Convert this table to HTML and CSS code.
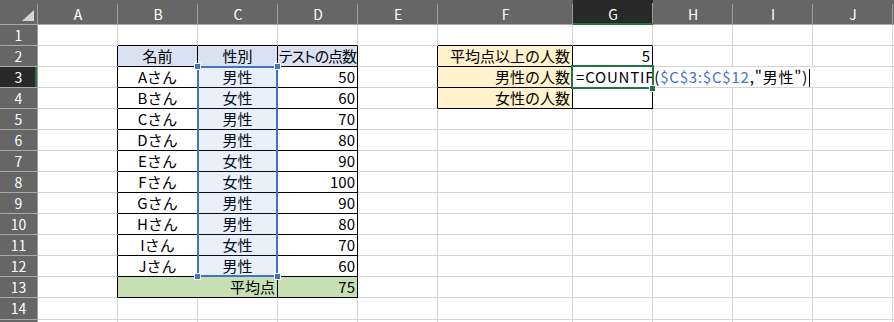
FILE: index.html
```html
<!DOCTYPE html>
<html lang="ja">
<head>
<meta charset="utf-8">
<title>Excel COUNTIF</title>
<link rel="stylesheet" href="styles.css">
</head>
<body>
<div class="sheet">
  <div class="row hdr">
    <div class="corner"><svg class="tri" width="38" height="24" viewBox="0 0 38 24"><polygon points="34,10 34,21 22,21" fill="#d4d4d4"/></svg></div>
    <div class="ch">A</div><div class="ch">B</div><div class="ch">C</div><div class="ch">D</div><div class="ch">E</div>
    <div class="ch">F</div><div class="ch sel">G</div><div class="ch">H</div><div class="ch">I</div><div class="ch">J</div><div class="ch"></div>
  </div>

  <div class="row">
    <div class="rh">1</div>
    <div class="c"></div><div class="c tb"></div><div class="c tb"></div><div class="c tb"></div><div class="c"></div>
    <div class="c tb"></div><div class="c tb"></div><div class="c"></div><div class="c"></div><div class="c"></div><div class="c"></div>
  </div>

  <div class="row">
    <div class="rh">2</div>
    <div class="c tr"></div>
    <div class="c bx hd ctr">名前</div>
    <div class="c bx hd ctr">性別</div>
    <div class="c bx hd narrow">テストの点数</div>
    <div class="c tr"></div>
    <div class="c bx yl rt">平均点以上の人数</div>
    <div class="c bx rt">5</div>
    <div class="c"></div><div class="c"></div><div class="c"></div><div class="c"></div>
  </div>

  <div class="row">
    <div class="rh sel">3</div>
    <div class="c tr"></div>
    <div class="c bx ctr">Aさん</div>
    <div class="c bx ctr">男性</div>
    <div class="c bx rt">50</div>
    <div class="c tr"></div>
    <div class="c bx yl rt">男性の人数</div>
    <div class="c bx active">
      <div class="editor">=COUNTIF<span class="paren">(</span><span class="ref">$C$3:$C$12</span>,"男性"<span class="paren">)</span><span class="caret"></span></div>
      <span class="handle"></span>
    </div>
    <div class="c"></div><div class="c"></div><div class="c"></div><div class="c"></div>
  </div>

  <div class="row">
    <div class="rh">4</div>
    <div class="c tr"></div>
    <div class="c bx ctr">Bさん</div>
    <div class="c bx ctr">女性</div>
    <div class="c bx rt">60</div>
    <div class="c tr"></div>
    <div class="c bx yl rt">女性の人数</div>
    <div class="c bx"></div>
    <div class="c"></div><div class="c"></div><div class="c"></div><div class="c"></div>
  </div>

  <div class="row">
    <div class="rh">5</div>
    <div class="c tr"></div>
    <div class="c bx ctr">Cさん</div>
    <div class="c bx ctr">男性</div>
    <div class="c bx rt">70</div>
    <div class="c"></div><div class="c"></div><div class="c"></div><div class="c"></div><div class="c"></div><div class="c"></div><div class="c"></div>
  </div>

  <div class="row">
    <div class="rh">6</div>
    <div class="c tr"></div>
    <div class="c bx ctr">Dさん</div>
    <div class="c bx ctr">男性</div>
    <div class="c bx rt">80</div>
    <div class="c"></div><div class="c"></div><div class="c"></div><div class="c"></div><div class="c"></div><div class="c"></div><div class="c"></div>
  </div>

  <div class="row">
    <div class="rh">7</div>
    <div class="c tr"></div>
    <div class="c bx ctr">Eさん</div>
    <div class="c bx ctr">女性</div>
    <div class="c bx rt">90</div>
    <div class="c"></div><div class="c"></div><div class="c"></div><div class="c"></div><div class="c"></div><div class="c"></div><div class="c"></div>
  </div>

  <div class="row">
    <div class="rh">8</div>
    <div class="c tr"></div>
    <div class="c bx ctr">Fさん</div>
    <div class="c bx ctr">女性</div>
    <div class="c bx rt">100</div>
    <div class="c"></div><div class="c"></div><div class="c"></div><div class="c"></div><div class="c"></div><div class="c"></div><div class="c"></div>
  </div>

  <div class="row">
    <div class="rh">9</div>
    <div class="c tr"></div>
    <div class="c bx ctr">Gさん</div>
    <div class="c bx ctr">男性</div>
    <div class="c bx rt">90</div>
    <div class="c"></div><div class="c"></div><div class="c"></div><div class="c"></div><div class="c"></div><div class="c"></div><div class="c"></div>
  </div>

  <div class="row">
    <div class="rh">10</div>
    <div class="c tr"></div>
    <div class="c bx ctr">Hさん</div>
    <div class="c bx ctr">男性</div>
    <div class="c bx rt">80</div>
    <div class="c"></div><div class="c"></div><div class="c"></div><div class="c"></div><div class="c"></div><div class="c"></div><div class="c"></div>
  </div>

  <div class="row">
    <div class="rh">11</div>
    <div class="c tr"></div>
    <div class="c bx ctr">Iさん</div>
    <div class="c bx ctr">女性</div>
    <div class="c bx rt">70</div>
    <div class="c"></div><div class="c"></div><div class="c"></div><div class="c"></div><div class="c"></div><div class="c"></div><div class="c"></div>
  </div>

  <div class="row">
    <div class="rh">12</div>
    <div class="c tr"></div>
    <div class="c bx ctr">Jさん</div>
    <div class="c bx ctr">男性</div>
    <div class="c bx rt">60</div>
    <div class="c"></div><div class="c"></div><div class="c"></div><div class="c"></div><div class="c"></div><div class="c"></div><div class="c"></div>
  </div>

  <div class="row">
    <div class="rh">13</div>
    <div class="c tr"></div>
    <div class="c bx gr rt span2">平均点</div>
    <div class="c bx gr rt">75</div>
    <div class="c"></div><div class="c"></div><div class="c"></div><div class="c"></div><div class="c"></div><div class="c"></div><div class="c"></div>
  </div>

  <div class="row tall">
    <div class="rh">14</div>
    <div class="c"></div><div class="c"></div><div class="c"></div><div class="c"></div><div class="c"></div>
    <div class="c"></div><div class="c"></div><div class="c"></div><div class="c"></div><div class="c"></div><div class="c"></div>
  </div>

  <div class="row">
    <div class="rh"></div>
    <div class="c"></div><div class="c"></div><div class="c"></div><div class="c"></div><div class="c"></div>
    <div class="c"></div><div class="c"></div><div class="c"></div><div class="c"></div><div class="c"></div><div class="c"></div>
  </div>

  <div class="refbox">
    <span class="knob k-tl"></span><span class="knob k-tr"></span>
    <span class="knob k-bl"></span><span class="knob k-br"></span>
  </div>
</div>
</body>
</html>
```

FILE: styles.css
```css
html, body {
  margin: 0;
  padding: 0;
  background: #ffffff;
}
body {
  width: 894px;
  height: 322px;
  overflow: hidden;
}
.sheet {
  position: relative;
  font-family: "Noto Sans CJK JP", "Noto Sans", sans-serif;
  color: #000;
}
.row {
  display: grid;
  grid-template-columns: 38px repeat(5, 80px) 135px repeat(5, 80px);
  height: 21px;
}
.hdr {
  height: 25px;
}
.row.tall,
.row.tall .rh,
.row.tall .c {
  height: 22px;
}
.row.tall .rh,
.row.tall .c {
  line-height: 21px;
}

/* column headers */
.corner, .ch {
  box-sizing: border-box;
  height: 25px;
  background: linear-gradient(#9a9a9a, #9a9a9a) right bottom / 1px 20px no-repeat, #666666;
  border-bottom: 1px solid #a9a9a9;
}
.tri {
  display: block;
}
.ch {
  color: #ffffff;
  font-family: "Noto Sans CJK JP", sans-serif;
  font-size: 14px;
  line-height: 20px;
  padding-top: 4px;
  text-align: center;
}
.ch.sel {
  background: linear-gradient(#9a9a9a, #9a9a9a) right bottom / 1px 20px no-repeat, #292929;
  border-bottom: 2px solid #217346;
}

/* row headers */
.rh {
  box-sizing: border-box;
  height: 21px;
  background: #666666;
  border-right: 1px solid #9a9a9a;
  border-bottom: 1px solid #a9a9a9;
  color: #ffffff;
  font-size: 14px;
  line-height: 20px;
  text-align: center;
}
.rh.sel {
  background: #292929;
  box-shadow: inset -2px 0 0 #217346;
}

/* cells */
.c {
  box-sizing: border-box;
  height: 21px;
  border-right: 1px solid #d4d4d4;
  border-bottom: 1px solid #d4d4d4;
  font-size: 15px;
  line-height: 20px;
  padding: 0 3px;
  white-space: nowrap;
  overflow: hidden;
}
.tb { border-bottom-color: #000; }
.tr { border-right-color: #000; }
.bx { border-right-color: #000; border-bottom-color: #000; }
.hd { background: #d9e1f2; }
.yl { background: #fff2cc; }
.gr { background: #c6e0b4; }
.ctr { text-align: center; }
.rt { text-align: right; padding-right: 2px; }
.span2 { grid-column: span 2; }
.narrow {
  padding: 0 0 0 1px;
  font-feature-settings: "palt";
  letter-spacing: -1px;
  text-align: left;
}

/* active cell in edit mode */
.active {
  position: relative;
  overflow: visible;
  z-index: 3;
  padding: 0;
}
.active::after {
  content: "";
  position: absolute;
  inset: -2px;
  border: 2px solid #217346;
  pointer-events: none;
}
.editor {
  position: absolute;
  left: 0;
  top: 0;
  height: 20px;
  padding: 0 4px 0 3px;
  background: #ffffff;
  white-space: nowrap;
  font-size: 15px;
  line-height: 20px;
  letter-spacing: 0.8px;
}
.editor .ref { color: #3f6fd1; }
.editor .paren { color: #000; }
.caret {
  display: inline-block;
  width: 1px;
  height: 18px;
  background: #000;
  vertical-align: -4px;
  margin-left: 1px;
}
.handle {
  position: absolute;
  right: -4px;
  bottom: -5px;
  width: 5px;
  height: 5px;
  background: #217346;
  border: 1px solid #ffffff;
  z-index: 2;
}

/* formula reference range C3:C12 */
.refbox {
  position: absolute;
  left: 197px;
  top: 66px;
  width: 81px;
  height: 211px;
  box-sizing: border-box;
  border: 2px solid #4472c4;
  background: rgba(68, 114, 196, 0.11);
  z-index: 2;
}
.knob {
  position: absolute;
  width: 5px;
  height: 5px;
  background: #4472c4;
  border: 1px solid #ffffff;
}
.k-tl { left: -5px; top: -5px; }
.k-tr { right: -5px; top: -5px; }
.k-bl { left: -5px; bottom: -5px; }
.k-br { right: -5px; bottom: -5px; }
```
